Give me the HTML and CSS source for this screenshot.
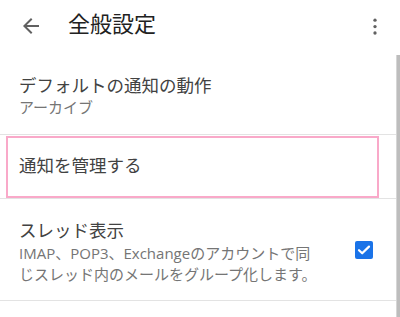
FILE: index.html
```html
<!DOCTYPE html>
<html lang="ja">
<head>
    <meta charset="UTF-8">
    <meta name="viewport" content="width=device-width, initial-scale=1.0">
    <title>全般設定</title>
    <link rel="stylesheet" href="styles.css">
</head>
<body>
    <div class="appbar">
        <button class="icon-btn back" aria-label="戻る">
            <svg viewBox="0 0 24 24" width="24" height="24"><path d="M20 11H7.83l5.59-5.59L12 4l-8 8 8 8 1.41-1.41L7.83 13H20v-2z"/></svg>
        </button>
        <h1 class="title">全般設定</h1>
        <button class="icon-btn more" aria-label="その他">
            <svg viewBox="0 0 24 24" width="24" height="24"><circle cx="12" cy="5" r="2"/><circle cx="12" cy="12.7" r="2"/><circle cx="12" cy="20.4" r="2"/></svg>
        </button>
    </div>

    <div class="list-wrap">
        <div class="list">
            <div class="item">
                <div class="item-title">デフォルトの通知の動作</div>
                <div class="item-sub">アーカイブ</div>
            </div>

            <div class="item item-focus">
                <div class="focus-box">
                    <div class="item-title">通知を管理する</div>
                </div>
            </div>

            <div class="item item-check">
                <div class="item-text">
                    <div class="item-title">スレッド表示</div>
                    <div class="item-sub">IMAP、POP3、Exchangeのアカウントで同じスレッド内のメールをグループ化します。</div>
                </div>
                <div class="checkbox checked">
                    <svg viewBox="0 0 18 18" width="18" height="18"><path d="M4 9.2l3.2 3.1L14 5.6" fill="none" stroke="#fff" stroke-width="2.2" stroke-linecap="round" stroke-linejoin="round"/></svg>
                </div>
            </div>
        </div>
        <div class="scrollbar"></div>
    </div>
</body>
</html>
```

FILE: styles.css
```css
:root {
    --text: #212121;
    --label: #424242;
    --muted: #757575;
    --icon: #616161;
    --divider: #e3e3e3;
    --accent: #1a73e8;
    --focus: #f9a9c9;
}

* {
    margin: 0;
    padding: 0;
    box-sizing: border-box;
}

body {
    background: #fff;
    font-family: Roboto, "Noto Sans CJK JP", sans-serif;
    color: var(--text);
    height: 317px;
    overflow: hidden;
}

.appbar {
    height: 55px;
    padding-bottom: 5px;
    display: flex;
    align-items: center;
}

.icon-btn {
    border: none;
    background: none;
    display: flex;
    align-items: center;
    justify-content: center;
    fill: var(--icon);
}

.back {
    width: 24px;
    margin-left: 19px;
    margin-top: 1px;
}

.title {
    font-size: 22px;
    font-weight: 400;
    margin-left: 25px;
    flex: 1;
    line-height: 30px;
}

.more {
    width: 24px;
    margin-right: 13px;
    margin-top: 1px;
}

.more svg {
    width: 20px;
    height: 20px;
}

.list-wrap {
    display: flex;
}

.list {
    flex: 1;
}

.scrollbar {
    width: 4.5px;
    height: 262px;
    background: #bdbdbd;
    border-left: 1px solid #d6d6d6;
}

.item {
    padding: 19px 19px 15px;
    border-bottom: 1px solid var(--divider);
}

.item-title {
    font-size: 17.5px;
    line-height: 24px;
    color: var(--label);
}

.item-sub {
    font-size: 15px;
    line-height: 21px;
    color: var(--muted);
}

.item-focus {
    padding: 1px 17px 0 6px;
}

.focus-box {
    border: 2px solid var(--focus);
    height: 62px;
    padding: 16px 11px;
}

.item-check {
    display: flex;
    align-items: flex-start;
    padding-top: 20px;
    padding-bottom: 15px;
}

.item-text {
    width: 305px;
    margin-right: 31px;
}

.item-check .item-sub {
    font-family: "Open Sans", "Noto Sans CJK JP", sans-serif;
}

.checkbox {
    width: 18px;
    height: 18px;
    border-radius: 2px;
    margin-top: 22px;
    display: flex;
}

.checkbox.checked {
    background: var(--accent);
}
```
